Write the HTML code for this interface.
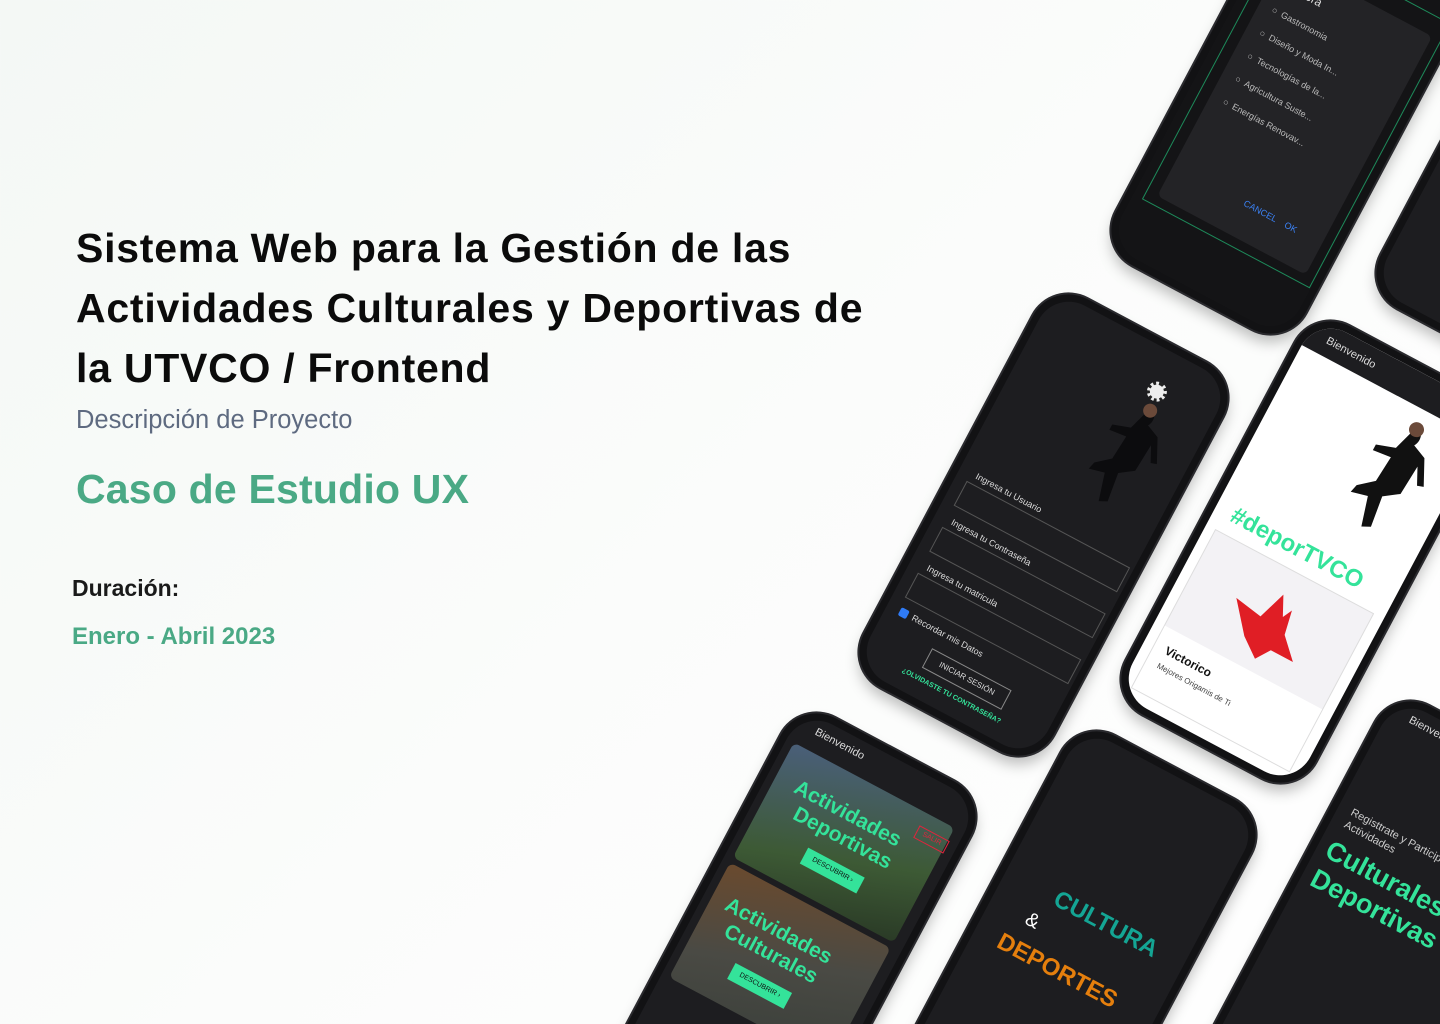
<!DOCTYPE html>
<html><head><meta charset="utf-8">
<style>
*{margin:0;padding:0;box-sizing:border-box}
html,body{width:1440px;height:1024px;overflow:hidden}
body{background:linear-gradient(135deg,#f4f8f5 0%,#fbfcfb 50%,#ffffff 100%);font-family:"Liberation Sans",sans-serif;position:relative}
.t{position:absolute;left:76px;font-weight:bold;color:#0b0b0b;font-size:41px;letter-spacing:0.75px;line-height:60px;top:218px;white-space:nowrap}
.desc{position:absolute;left:76px;top:406px;font-size:25.5px;color:#5e6a80}
.caso{position:absolute;left:76px;top:466px;font-size:41px;font-weight:bold;color:#4aa985;letter-spacing:0.2px}
.dur{position:absolute;left:72px;top:575px;font-size:23px;font-weight:bold;color:#1a1a1a}
.fecha{position:absolute;left:72px;top:623px;font-size:24px;font-weight:bold;color:#4aa985}
.ph{position:absolute;width:215px;height:440px;margin-left:-107px;margin-top:-220px;transform:rotate(28deg);background:#121214;border-radius:40px;box-shadow:0 0 0 2px #2a2a2e,4px 8px 14px rgba(0,0,0,.25);overflow:hidden}
.sc{position:absolute;left:7px;top:7px;right:7px;bottom:7px;border-radius:34px;background:#1d1d20;overflow:hidden;color:#ddd}
.lbl{position:absolute;font-size:9px;color:#ddd;white-space:nowrap}
.inp{position:absolute;border:1px solid #555;height:28px}
.g{color:#34e39a;font-weight:bold}
</style></head><body>
<div class="t">Sistema Web para la Gestión de las<br>Actividades Culturales y Deportivas de<br>la UTVCO / Frontend</div>
<div class="desc">Descripción de Proyecto</div>
<div class="caso">Caso de Estudio UX</div>
<div class="dur">Duración:</div>
<div class="fecha">Enero - Abril 2023</div>

<!-- top phone -->
<div class="ph" style="left:1295px;top:103px">
 <div class="sc" style="background:#141416">
  <div style="position:absolute;left:10px;top:70px;width:190px;height:300px;border:1px solid #1d8a5a"></div>
  <div style="position:absolute;left:22px;top:90px;width:168px;height:270px;background:#232326;border-radius:6px">
   <div class="lbl" style="left:14px;top:16px;font-size:12px">Carrera</div>
   <div class="lbl" style="left:14px;top:46px;color:#bbb">○ &nbsp;Gastronomia</div>
   <div class="lbl" style="left:14px;top:72px;color:#bbb">○ &nbsp;Diseño y Moda In...</div>
   <div class="lbl" style="left:14px;top:98px;color:#bbb">○ &nbsp;Tecnologías de la...</div>
   <div class="lbl" style="left:14px;top:124px;color:#bbb">○ &nbsp;Agricultura Suste...</div>
   <div class="lbl" style="left:14px;top:150px;color:#bbb">○ &nbsp;Energías Renovav...</div>
   <div class="lbl" style="left:80px;top:230px;color:#3b82f6">CANCEL &nbsp;&nbsp; OK</div>
  </div>
 </div>
</div>
<!-- right top partial -->
<div class="ph" style="left:1560px;top:146px"><div class="sc"></div></div>

<!-- login phone -->
<div class="ph" style="left:1043px;top:525px">
 <div class="sc">
  <div style="position:absolute;left:128px;top:32px;width:20px;height:20px;border-radius:50%;background:#eee;border:3px dotted #222"></div>
  <svg style="position:absolute;left:95px;top:50px" width="90" height="140" viewBox="0 0 90 140"><path d="M45 10c8 0 10 10 6 16l14 6 12 24-6 2-8-16-2 30-14 10 4 30-8 4-8-28-16 4 2-8 14-12 2-26-18 2 0-6 18-6z" fill="#0c0c0e"/><circle cx="46" cy="12" r="7" fill="#6b4a3a"/></svg>
  <div class="lbl" style="left:18px;top:196px">Ingresa tu Usuario</div>
  <div class="inp" style="left:12px;top:210px;width:185px"></div>
  <div class="lbl" style="left:18px;top:248px">Ingresa tu Contraseña</div>
  <div class="inp" style="left:12px;top:262px;width:185px"></div>
  <div class="lbl" style="left:18px;top:300px">Ingresa tu matricula</div>
  <div class="inp" style="left:12px;top:314px;width:185px"></div>
  <div style="position:absolute;left:14px;top:352px;width:9px;height:9px;background:#2f7bf6;border-radius:2px"></div>
  <div class="lbl" style="left:28px;top:351px">Recordar mis Datos</div>
  <div style="position:absolute;left:60px;top:374px;width:90px;height:22px;border:1px solid #888;font-size:8px;color:#ddd;text-align:center;line-height:20px">INICIAR SESIÓN</div>
  <div class="lbl g" style="left:44px;top:404px;font-size:7px">¿OLVIDASTE TU CONTRASEÑA?</div>
 </div>
</div>

<!-- white phone -->
<div class="ph" style="left:1305px;top:552px">
 <div class="sc" style="background:#fff">
  <div style="position:absolute;left:0;top:0;right:0;height:32px;background:#1d1d20"></div>
  <div class="lbl" style="left:20px;top:10px;font-size:11px">Bienvenido</div>
  <svg style="position:absolute;left:90px;top:40px" width="100" height="150" viewBox="0 0 90 140"><path d="M45 10c8 0 10 10 6 16l14 6 12 24-6 2-8-16-2 30-14 10 4 30-8 4-8-28-16 4 2-8 14-12 2-26-18 2 0-6 18-6z" fill="#111"/><circle cx="46" cy="12" r="7" fill="#6b4a3a"/></svg>
  <div class="lbl g" style="left:18px;top:200px;font-size:24px">#deporTVCO</div>
  <div style="position:absolute;left:10px;top:235px;width:180px;height:180px;border:1px solid #ddd;background:#f3f2f5">
   <svg style="position:absolute;left:40px;top:20px" width="100" height="80" viewBox="0 0 100 80"><path d="M10 30l30 5 10-30 10 20 5-10 5 25 20 20-25 0-10 15-20-15z" fill="#e01e25"/></svg>
   <div style="position:absolute;left:0;bottom:0;right:0;height:70px;background:#fff"></div>
   <div class="lbl" style="left:12px;top:122px;color:#111;font-weight:bold;font-size:12px">Victorico</div>
   <div class="lbl" style="left:12px;top:142px;color:#444;font-size:8px">Mejores Origamis de Ti</div>
  </div>
 </div>
</div>

<!-- bottom-left phone -->
<div class="ph" style="left:791px;top:944px">
 <div class="sc">
  <div class="lbl" style="left:22px;top:8px;font-size:11px">Bienvenido</div>
  <div style="position:absolute;left:8px;top:34px;width:182px;height:130px;border-radius:6px;background:linear-gradient(160deg,#4a5f7a,#3d5a35 60%,#2a3a26)"></div>
  <div style="position:absolute;left:8px;top:170px;width:182px;height:130px;border-radius:6px;background:linear-gradient(160deg,#6a4a2e,#4a4a44 50%,#3a3f3a)"></div>
  <div class="lbl g" style="left:30px;top:60px;font-size:21px;line-height:24px">Actividades<br>&nbsp;&nbsp;Deportivas</div>
  <div style="position:absolute;left:70px;top:120px;width:64px;height:18px;background:#34e39a;color:#111;font-size:7px;line-height:18px;text-align:center">DESCUBRIR ›</div>
  <div style="position:absolute;left:158px;top:48px;width:34px;height:14px;border:1px solid #e0243c;color:#e0243c;font-size:7px;line-height:12px;text-align:center">SALIR</div>
  <div class="lbl g" style="left:24px;top:196px;font-size:21px;line-height:24px">Actividades<br>&nbsp;&nbsp;Culturales</div>
  <div style="position:absolute;left:60px;top:256px;width:64px;height:18px;background:#34e39a;color:#111;font-size:7px;line-height:18px;text-align:center">DESCUBRIR ›</div>
 </div>
</div>

<!-- bottom middle phone -->
<div class="ph" style="left:1071px;top:962px">
 <div class="sc">
  <div class="lbl" style="left:56px;top:150px;font-size:24px;font-weight:bold;color:#14a594">CULTURA</div>
  <div class="lbl" style="left:40px;top:184px;font-size:20px;color:#fff">&amp;</div>
  <div class="lbl" style="left:26px;top:214px;font-size:24px;font-weight:bold;color:#e57f0d">DEPORTES</div>
 </div>
</div>

<!-- bottom right phone -->
<div class="ph" style="left:1385px;top:932px">
 <div class="sc">
  <div class="lbl" style="left:22px;top:8px;font-size:11px">Bienvenido</div>
  <div class="lbl" style="left:14px;top:116px;font-size:11px;line-height:14px;color:#ccc">Registtrate y Participa<br>Actividades</div>
  <div class="lbl g" style="left:10px;top:150px;font-size:27px;line-height:32px">Culturales y<br>Deportivas</div>
 </div>
</div>
</body></html>
